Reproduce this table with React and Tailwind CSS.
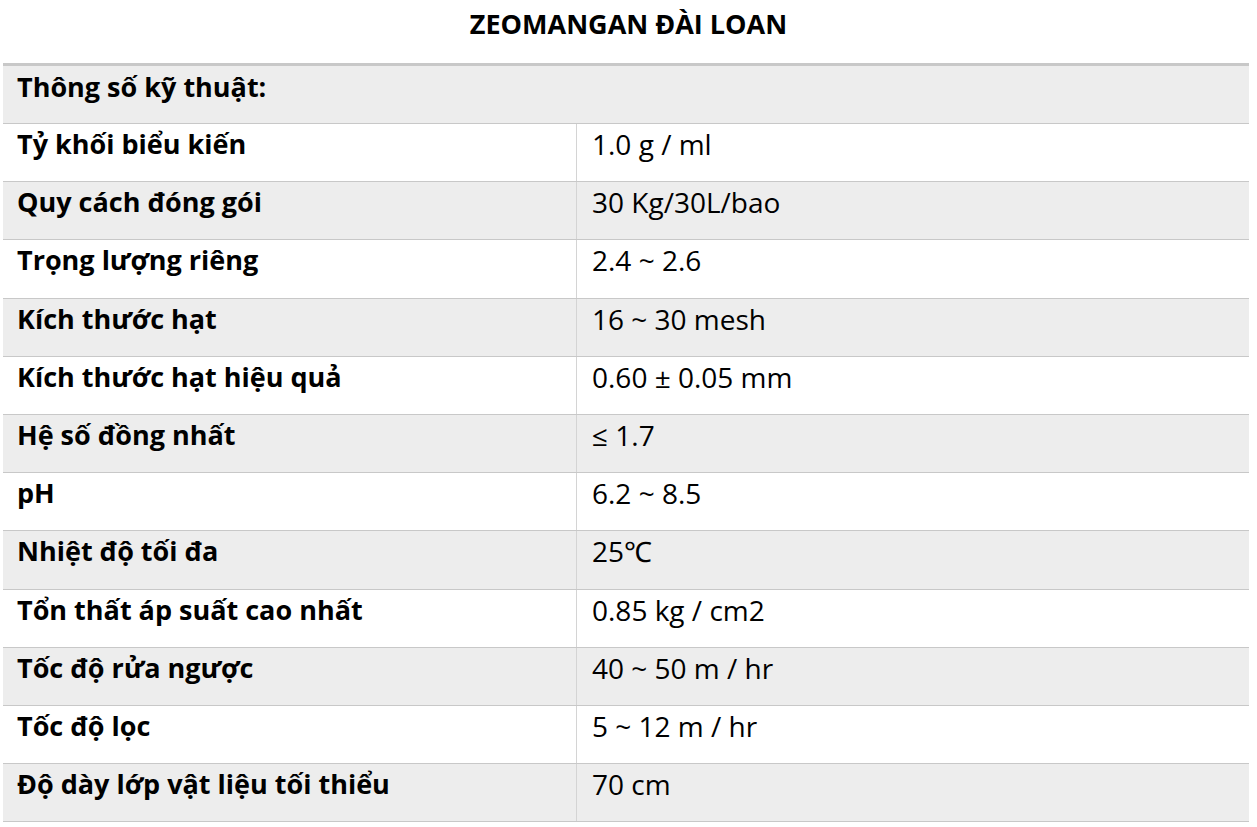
import React from 'react';

const rows = [
  ['Tỷ khối biểu kiến', '1.0 g / ml'],
  ['Quy cách đóng gói', '30 Kg/30L/bao'],
  ['Trọng lượng riêng', '2.4 ~ 2.6'],
  ['Kích thước hạt', '16 ~ 30 mesh'],
  ['Kích thước hạt hiệu quả', '0.60 ± 0.05 mm'],
  ['Hệ số đồng nhất', '≤ 1.7'],
  ['pH', '6.2 ~ 8.5'],
  ['Nhiệt độ tối đa', '25℃'],
  ['Tổn thất áp suất cao nhất', '0.85 kg / cm2'],
  ['Tốc độ rửa ngược', '40 ~ 50 m / hr'],
  ['Tốc độ lọc', '5 ~ 12 m / hr'],
  ['Độ dày lớp vật liệu tối thiểu', '70 cm'],
];

export default function App() {
  return (
    <div className="h-[827px] w-[1257px] overflow-hidden bg-white text-black" style={{ fontFamily: '"Open Sans", sans-serif' }}>
      <div className="flex h-[63px] items-center justify-center pb-[14px] text-[27px] font-bold">
        ZEOMANGAN ĐÀI LOAN
      </div>
      <div className="ml-[3px] w-[1246px] border-t-[3px] border-[#c8c8c8]">
        <div className="h-[58px] border-b border-[#c8c8c8] bg-[#ededed] px-[14px] pt-[1px] text-[27px] font-bold leading-[40px]">
          Thông số kỹ thuật:
        </div>
        {rows.map(([k, v], i) => (
          <div
            key={k}
            className={
              'flex h-[58.2px] border-b border-[#c8c8c8] leading-[40px] ' +
              (i % 2 === 1 ? 'bg-[#ededed]' : 'bg-white')
            }
          >
            <div className="w-[574px] shrink-0 border-r border-[#d4d4d4] px-[14px] text-[27px] font-bold">{k}</div>
            <div className="flex-1 px-[15px] text-[28px]">{v}</div>
          </div>
        ))}
      </div>
    </div>
  );
}
